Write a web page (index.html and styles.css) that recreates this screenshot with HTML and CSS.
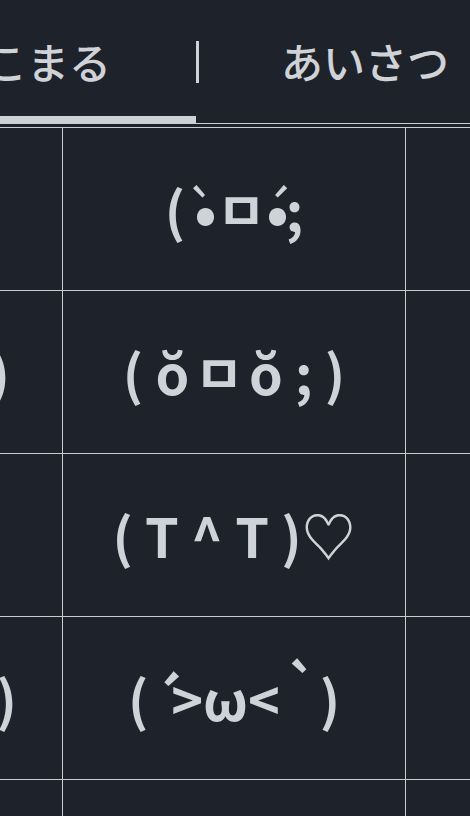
FILE: index.html
```html
<!DOCTYPE html>
<html lang="ja">
<head>
<meta charset="utf-8">
<link rel="stylesheet" href="styles.css">
</head>
<body>
<nav class="tabs">
  <div class="tab tab-active"><span class="tab-label">こまる</span></div>
  <div class="sep"></div>
  <div class="tab tab-next"><span class="tab-label">あいさつ</span></div>
</nav>
<div class="grid">
  <div class="cell cell-left"></div>
  <div class="cell kao">(<span class="mk mk-gr">`</span><span class="dot">•</span>ㅁ<span class="mk mk-ac">´</span><span class="dot">•</span><span class="semi">;</span></div>
  <div class="cell"></div>

  <div class="cell cell-left kao left-a">(；ﾟДﾟ)</div>
  <div class="cell kao">( ŏ<span class="box">ㅁ</span>ŏ ; )</div>
  <div class="cell"></div>

  <div class="cell cell-left"></div>
  <div class="cell kao">( T ^ T )♡</div>
  <div class="cell"></div>

  <div class="cell cell-left kao left-b">(&gt;_&lt;)</div>
  <div class="cell kao">(<span class="acute">´</span>&gt;ω&lt;<span class="raise">`</span> )</div>
  <div class="cell"></div>

  <div class="cell cell-left"></div>
  <div class="cell"></div>
  <div class="cell"></div>
</div>
</body>
</html>
```

FILE: styles.css
```css
html, body {
  margin: 0;
  padding: 0;
}
body {
  background: #1e222a;
  color: #cfd2d6;
  font-family: "Noto Sans CJK JP", "Noto Sans", sans-serif;
  overflow: hidden;
  height: 816px;
}
.tabs {
  display: flex;
  align-items: stretch;
  height: 124px;
  box-sizing: border-box;
  border-bottom: 1px solid #c9cdd2;
}
.tab {
  display: flex;
  align-items: center;
  box-sizing: border-box;
  padding-top: 6px;
}
.tab-active {
  width: 196px;
  flex-shrink: 0;
  justify-content: flex-end;
  padding-right: 85px;
  border-bottom: 7px solid #cdd1d6;
  overflow: hidden;
}
.tab-next {
  padding-left: 82px;
  padding-bottom: 7px;
}
.tab-label {
  font-size: 42px;
  line-height: 1;
  font-weight: 500;
  white-space: nowrap;
  flex-shrink: 0;
}
.sep {
  width: 3px;
  height: 42px;
  align-self: center;
  background: #cfd2d6;
  flex-shrink: 0;
}
.grid {
  display: grid;
  grid-template-columns: 62px 342px 1fr;
  grid-auto-rows: 162px;
  gap: 1px;
  padding-top: 1px;
  margin-top: 3px;
  background: #c9cdd2;
}
.cell {
  background: #1e222a;
  display: flex;
  align-items: center;
  justify-content: center;
  overflow: hidden;
  white-space: nowrap;
}
.kao {
  font-size: 54px;
  font-weight: 700;
  line-height: 1.2;
}
.mk {
  display: inline-block;
  width: 0;
  font-weight: 400;
}
.mk-gr {
  margin-left: 9px;
  transform: translateX(-9px);
}
.mk-ac {
  transform: translateX(-4px);
}
.dot {
  font-size: 1.1em;
  line-height: 0;
}
.semi {
  margin-left: -3px;
}
.box {
  margin: 0 5px;
}
.acute {
  margin-left: 3px;
  margin-right: -14px;
}
.raise {
  display: inline-block;
  margin-left: 6px;
  transform: translateY(-13px);
}
.cell-left {
  justify-content: flex-end;
}
.left-a {
  padding-right: 52px;
}
.left-b {
  padding-right: 45px;
}
```
